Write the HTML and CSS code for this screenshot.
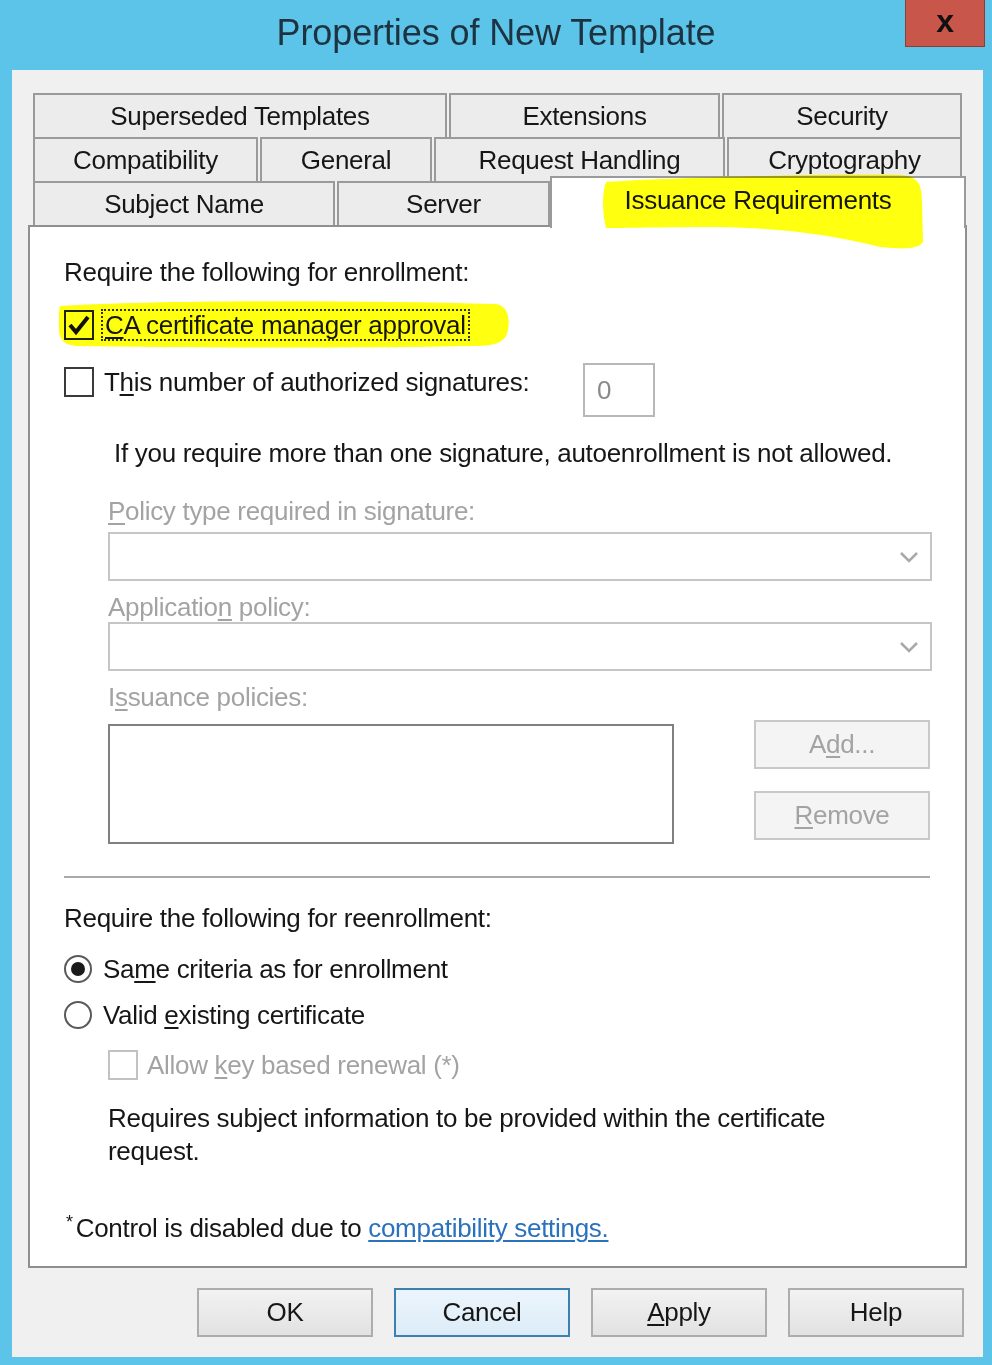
FILE: index.html
```html
<!DOCTYPE html>
<html lang="en">
<head>
<meta charset="UTF-8" />
<title>Properties of New Template</title>
<link rel="stylesheet" href="styles.css">
</head>
<body>
  <!-- Barre de titre -->
  <div class="titlebar">
    <span></span>
    <div class="title">Properties of New Template</div>
    <div class="close-box">x</div>
  </div>

  <!-- Zone client -->
  <div class="client">
    <div class="tabs">
      <div class="tab-row">
        <div class="tab t-superseded">Superseded Templates</div>
        <div class="tab t-extensions">Extensions</div>
        <div class="tab t-security">Security</div>
      </div>
      <div class="tab-row">
        <div class="tab t-compat">Compatibility</div>
        <div class="tab t-general">General</div>
        <div class="tab t-request">Request Handling</div>
        <div class="tab t-crypto">Cryptography</div>
      </div>
      <div class="tab-row">
        <div class="tab t-subject">Subject Name</div>
        <div class="tab t-server">Server</div>
        <div class="tab active">Issuance Requirements</div>
      </div>
    </div>

    <div class="panel">
      <div class="line">Require the following for enrollment:</div>

      <div class="check-row first">
        <span class="box checked">
          <svg width="26" height="26" viewBox="0 0 26 26"><path d="M4 13 L10 20 L22 5" fill="none" stroke="#111" stroke-width="4"/></svg>
        </span>
        <span class="focus"><u>C</u>A certificate manager approval</span>
      </div>

      <div class="sig-row">
        <div class="sig-label">
          <span class="box"></span>
          <span class="label-text">T<u>h</u>is number of authorized signatures:</span>
        </div>
        <div class="num">0</div>
      </div>

      <div class="line note">If you require more than one signature, autoenrollment is not allowed.</div>

      <div class="sub">
        <div class="dim label-top"><u>P</u>olicy type required in signature:</div>
        <div class="combo">
          <svg width="20" height="12" viewBox="0 0 20 12"><path d="M2 2 L10 10 L18 2" fill="none" stroke="#a9a9a9" stroke-width="2.5"/></svg>
        </div>
        <div class="dim label-top spaced">Applicatio<u>n</u> policy:</div>
        <div class="combo">
          <svg width="20" height="12" viewBox="0 0 20 12"><path d="M2 2 L10 10 L18 2" fill="none" stroke="#a9a9a9" stroke-width="2.5"/></svg>
        </div>
        <div class="dim label-top spaced">I<u>s</u>suance policies:</div>
        <div class="policies">
          <div class="list"></div>
          <div class="side">
            <div class="btn-dis">A<u>d</u>d...</div>
            <div class="btn-dis"><u>R</u>emove</div>
          </div>
        </div>
      </div>

      <div class="sep"></div>

      <div class="line reenroll">Require the following for reenrollment:</div>

      <div class="radio-row first-radio">
        <span class="radio on"><span class="dot"></span></span>
        <span>Sa<u>m</u>e criteria as for enrollment</span>
      </div>
      <div class="radio-row second-radio">
        <span class="radio"></span>
        <span>Valid <u>e</u>xisting certificate</span>
      </div>

      <div class="check-row sub-check">
        <span class="box disabled"></span>
        <span class="dim">Allow <u>k</u>ey based renewal (*)</span>
      </div>

      <div class="requires">Requires subject information to be provided within the certificate request.</div>

      <div class="line footnote"><span class="star">*</span>Control is disabled due to <a href="#">compatibility settings.</a></div>
    </div>

    <div class="actions">
      <div class="btn">OK</div>
      <div class="btn default">Cancel</div>
      <div class="btn"><u>A</u>pply</div>
      <div class="btn">Help</div>
    </div>
  </div>

  <!-- Surlignages jaunes -->
  <svg class="marker hl-tab" width="330" height="80" viewBox="0 0 330 80">
    <path d="M6 10 C60 6 200 2 300 3 C318 4 322 12 322 30 L323 70 C318 78 300 77 280 75 C230 62 180 56 120 55 C70 55 30 56 6 56 C2 40 2 20 6 10 Z" fill="#ffff10"/>
  </svg>
  <svg class="marker hl-ca" width="460" height="52" viewBox="0 0 460 52">
    <path d="M4 8 C100 2 300 2 440 6 C452 8 454 20 452 32 C450 44 440 48 420 48 C300 50 140 50 20 48 C6 47 2 40 3 26 C3 16 3 10 4 8 Z" fill="#ffff10"/>
  </svg>
</body>
</html>
```

FILE: styles.css
```css
/* ========== Fenêtre ========== */
html, body {
  margin: 0;
}
body {
  position: relative;
  width: 992px;
  height: 1365px;
  overflow: hidden;
  background: #5cc4e8;
  font-family: "Liberation Sans", Arial, sans-serif;
  font-size: 26px;
  letter-spacing: -0.3px;
  color: #161616;
}
u {
  text-decoration-thickness: 2px;
  text-underline-offset: 3px;
}
/* Barre de titre */
.titlebar {
  display: grid;
  grid-template-columns: 1fr auto 1fr;
  height: 70px;
}
.title {
  font-size: 36px;
  line-height: 66px;
  letter-spacing: -0.1px;
  color: #1d3342;
}
.close-box {
  justify-self: end;
  width: 80px;
  height: 47px;
  margin-right: 7px;
  box-sizing: border-box;
  background: #c9564b;
  border: 1px solid #8c3d36;
  border-top: none;
  display: flex;
  justify-content: center;
  align-items: center;
  font-weight: bold;
  font-size: 32px;
  color: #111;
  padding-bottom: 4px;
}
/* Zone client */
.client {
  margin: 0 9px 0 12px;
  height: 1287px;
  box-sizing: border-box;
  padding: 23px 16px 20px;
  background: #f0f0f0;
}
/* Onglets */
.tabs {
  padding: 0 5px;
}
.tab-row {
  display: flex;
  gap: 2px;
  height: 44px;
}
.tab {
  box-sizing: border-box;
  height: 44px;
  border: 2px solid #9a9a9a;
  border-bottom: none;
  background: #ececec;
  display: flex;
  justify-content: center;
  align-items: center;
  white-space: nowrap;
}
.t-superseded { flex: 0 0 414px; }
.t-extensions { flex: 0 0 271px; }
.t-security { flex: 0 0 240px; }
.t-compat { flex: 0 0 225px; }
.t-general { flex: 0 0 172px; }
.t-request { flex: 0 0 291px; }
.t-crypto { flex: 0 0 235px; }
.t-subject { flex: 0 0 302px; }
.t-server { flex: 0 0 213px; }
.tab.active {
  position: relative;
  z-index: 1;
  flex: 0 0 416px;
  height: 52px;
  margin: -5px -4px 0 -2px;
  padding-bottom: 6px;
  background: #fff;
}
/* Panneau */
.panel {
  background: #fff;
  border: 2px solid #8f8f8f;
  padding: 28px 33px 21px 34px;
}
.line {
  line-height: 34px;
}
.check-row {
  display: flex;
  align-items: center;
  height: 34px;
}
.check-row.first {
  margin-top: 19px;
}
.box {
  width: 30px;
  height: 30px;
  box-sizing: border-box;
  border: 2px solid #3a3a3a;
  background: #fff;
  margin-right: 7px;
  display: flex;
  justify-content: center;
  align-items: center;
  flex: none;
}
.box.checked {
  border-color: #222;
}
.box.disabled {
  border-color: #c2c2c2;
  margin-right: 9px;
}
.focus {
  border: 2px dotted #333;
  line-height: 28px;
  padding: 0 2px;
}
.sig-row {
  display: flex;
  align-items: flex-start;
  margin-top: 21px;
}
.sig-label {
  flex: 0 0 519px;
  display: flex;
  align-items: center;
  height: 34px;
  margin-top: 2px;
}
.sig-label .box {
  margin-right: 10px;
}
.num {
  width: 72px;
  height: 54px;
  box-sizing: border-box;
  border: 2px solid #b8b8b8;
  color: #8a8a8a;
  padding: 10px 0 0 12px;
}
.note {
  margin: 19px 0 0 50px;
}
/* Contrôles désactivés */
.sub {
  margin-left: 44px;
}
.dim {
  color: #a3a3a3;
}
.label-top {
  line-height: 30px;
  margin-top: 26px;
}
.label-top.spaced {
  margin-top: 11px;
}
.combo {
  height: 49px;
  margin-top: 6px;
  box-sizing: border-box;
  border: 2px solid #c6c6c6;
  display: flex;
  justify-content: flex-end;
  align-items: center;
  padding-right: 11px;
}
.label-top.spaced + .combo {
  margin-top: 0;
}
.policies {
  display: flex;
  margin-top: 8px;
}
.list {
  width: 566px;
  height: 120px;
  margin-top: 4px;
  box-sizing: border-box;
  border: 2px solid #808080;
}
.side {
  margin-left: 80px;
  display: flex;
  flex-direction: column;
  gap: 22px;
}
.btn-dis {
  width: 176px;
  height: 49px;
  box-sizing: border-box;
  border: 2px solid #c8c8c8;
  background: #f4f4f4;
  color: #a3a3a3;
  display: flex;
  justify-content: center;
  align-items: center;
}
.sep {
  margin: 32px 2px 0 0;
  border-top: 2px solid #a9a9a9;
}
.reenroll {
  margin-top: 23px;
}
/* Boutons radio */
.radio-row {
  display: flex;
  align-items: center;
  height: 34px;
}
.first-radio {
  margin-top: 17px;
}
.second-radio {
  margin-top: 12px;
}
.radio {
  width: 28px;
  height: 28px;
  box-sizing: border-box;
  border: 2px solid #5a5a5a;
  border-radius: 50%;
  background: #fff;
  margin-right: 11px;
  display: flex;
  justify-content: center;
  align-items: center;
}
.radio .dot {
  width: 14px;
  height: 14px;
  border-radius: 50%;
  background: #1a1a1a;
}
.sub-check {
  margin: 16px 0 0 44px;
}
.requires {
  margin: 20px 40px 0 44px;
  line-height: 33px;
}
.footnote {
  margin: 43px 0 0 2px;
}
.star {
  font-size: 18px;
  vertical-align: top;
  line-height: 22px;
  margin-right: 3px;
}
.footnote a {
  color: #2b72bd;
  text-decoration-thickness: 2px;
  text-underline-offset: 3px;
}
/* Boutons du bas */
.actions {
  display: flex;
  justify-content: flex-end;
  gap: 21px;
  margin-top: 20px;
  padding-right: 3px;
}
.btn {
  width: 176px;
  height: 49px;
  box-sizing: border-box;
  border: 2px solid #adadad;
  background: linear-gradient(#f2f2f2, #e2e2e2);
  display: flex;
  justify-content: center;
  align-items: center;
}
.btn.default {
  border-color: #3c7fb1;
  background: linear-gradient(#ecf5fc, #dcecf8);
}
/* Surlignages */
.marker {
  position: absolute;
  mix-blend-mode: multiply;
  z-index: 5;
}
.hl-tab {
  left: 600px;
  top: 172px;
}
.hl-ca {
  left: 56px;
  top: 298px;
}
```
